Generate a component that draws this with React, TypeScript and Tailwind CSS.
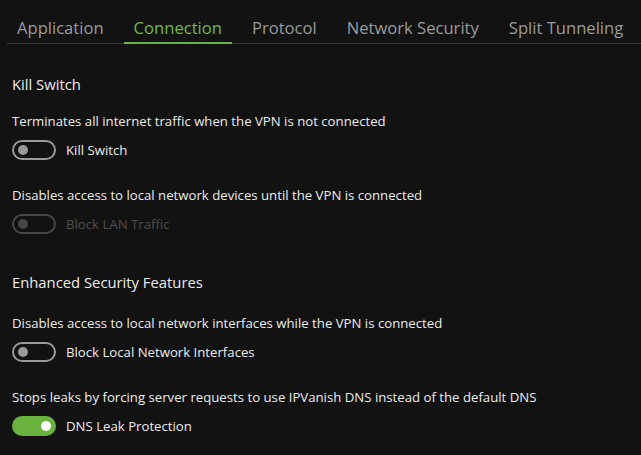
import React from "react";

type Tab = { id: string; label: string };

const tabs: Tab[] = [
  { id: "application", label: "Application" },
  { id: "connection", label: "Connection" },
  { id: "protocol", label: "Protocol" },
  { id: "network-security", label: "Network Security" },
  { id: "split-tunneling", label: "Split Tunneling" },
];

function Toggle({ on, disabled }: { on?: boolean; disabled?: boolean }) {
  if (on) {
    return (
      <div className="flex items-center justify-end w-[44px] h-[20px] rounded-full bg-[#6ab23e] pr-[5px] shrink-0">
        <div className="w-[10px] h-[10px] rounded-full bg-white" />
      </div>
    );
  }
  return (
    <div
      className={[
        "flex items-center w-[44px] h-[20px] rounded-full border-2 pl-[4px] shrink-0",
        disabled ? "border-[#464646]" : "border-[#9a9a9a]",
      ].join(" ")}
    >
      <div
        className={[
          "w-[10px] h-[10px] rounded-full",
          disabled ? "bg-[#464646]" : "bg-[#9a9a9a]",
        ].join(" ")}
      />
    </div>
  );
}

function Setting({
  description,
  label,
  on,
  disabled,
}: {
  description: string;
  label: string;
  on?: boolean;
  disabled?: boolean;
}) {
  return (
    <div className="flex flex-col">
      <p className="pt-[1px] text-[13.2px] leading-[18px] text-[#ececec] whitespace-nowrap">
        {description}
      </p>
      <div className="flex items-center gap-[10px] mt-[10px]">
        <Toggle on={on} disabled={disabled} />
        <span
          className={[
            "text-[13.2px] leading-[18px] whitespace-nowrap",
            disabled ? "text-[#4e4e4e]" : "text-[#ececec]",
          ].join(" ")}
        >
          {label}
        </span>
      </div>
    </div>
  );
}

export default function App() {
  const active = "connection";

  return (
    <div
      className="w-[641px] h-[455px] bg-[#121212] overflow-hidden"
      style={{ fontFamily: '"Open Sans", "Noto Sans", sans-serif' }}
    >
      {/* Tabs */}
      <div className="ml-[7px] pt-[16px] flex border-b border-[#3c3c3c] pl-[10px] gap-[30px]">
        {tabs.map((tab) =>
          tab.id === active ? (
            <div
              key={tab.id}
              className="relative -mx-[10px] px-[10px] pb-[3px] text-[16.6px] leading-[24px] text-[#6fbb45] whitespace-nowrap"
            >
              {tab.label}
              <div className="absolute left-0 right-0 -bottom-[1px] h-[2px] bg-[#6ab23e]" />
            </div>
          ) : (
            <div
              key={tab.id}
              className="pb-[3px] text-[16.6px] leading-[24px] text-[#9b9b9b] whitespace-nowrap"
            >
              {tab.label}
            </div>
          )
        )}
      </div>

      <div className="px-[12px] pt-[30px]">
        <h2 className="text-[14.8px] leading-[20px] text-[#ececec]">Kill Switch</h2>
        <div className="mt-[17px] flex flex-col gap-[25px]">
          <Setting
            description="Terminates all internet traffic when the VPN is not connected"
            label="Kill Switch"
          />
          <Setting
            description="Disables access to local network devices until the VPN is connected"
            label="Block LAN Traffic"
            disabled
          />
        </div>

        <h2 className="mt-[38px] text-[14.8px] leading-[20px] text-[#ececec]">
          Enhanced Security Features
        </h2>
        <div className="mt-[21px] flex flex-col gap-[25px]">
          <Setting
            description="Disables access to local network interfaces while the VPN is connected"
            label="Block Local Network Interfaces"
          />
          <Setting
            description="Stops leaks by forcing server requests to use IPVanish DNS instead of the default DNS"
            label="DNS Leak Protection"
            on
          />
        </div>
      </div>
    </div>
  );
}
